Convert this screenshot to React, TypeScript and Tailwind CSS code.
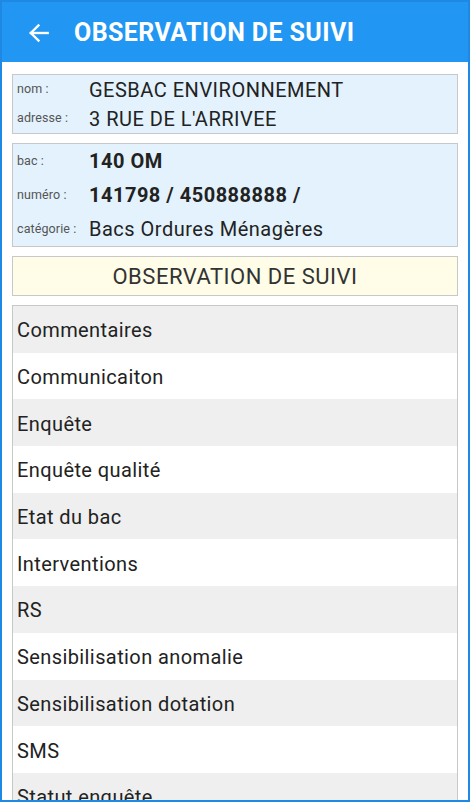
import React from "react";

const items = [
  "Commentaires",
  "Communicaiton",
  "Enquête",
  "Enquête qualité",
  "Etat du bac",
  "Interventions",
  "RS",
  "Sensibilisation anomalie",
  "Sensibilisation dotation",
  "SMS",
  "Statut enquête",
];

function Row({ label, value, bold, h }: { label: string; value: string; bold?: boolean; h: string }) {
  return (
    <div className={`flex items-center ${h}`}>
      <div className="w-[76px] shrink-0 pl-[4px] text-[12.5px] text-[#555555] tracking-[0.1px]">{label}</div>
      <div className={`text-[20px] text-[#222222] tracking-[0.5px] whitespace-nowrap ${bold ? "font-bold" : ""}`}>{value}</div>
    </div>
  );
}

export default function App() {
  return (
    <div
      className="w-[470px] h-[802px] overflow-hidden border-2 border-[#1E88E5] bg-white flex flex-col"
      style={{ fontFamily: "Roboto, 'Noto Sans', sans-serif" }}
    >
      <div className="h-[60px] shrink-0 bg-[#2196F3] flex items-center pt-[2px]">
        <svg className="ml-[24px] w-[26px] h-[26px]" viewBox="0 0 24 24" fill="none" stroke="white" strokeWidth="2.2" strokeLinecap="square">
          <path d="M20 12H4.5" />
          <path d="M11.5 5L4.5 12L11.5 19" />
        </svg>
        <div className="ml-[22px] text-white font-bold text-[25px] tracking-[0.4px]">OBSERVATION DE SUIVI</div>
      </div>
      <div className="flex-1 flex flex-col px-[10px] pt-[12px]">
        <div className="border border-[#c8c8c8] bg-[#E3F2FD]">
          <Row h="h-[29px]" label="nom :" value="GESBAC ENVIRONNEMENT" />
          <Row h="h-[29px]" label="adresse :" value="3 RUE DE L'ARRIVEE" />
        </div>
        <div className="mt-[9px] border border-[#c8c8c8] bg-[#E3F2FD]">
          <Row h="h-[34px]" bold label="bac :" value="140 OM" />
          <Row h="h-[34px]" bold label="numéro :" value="141798 / 450888888 /" />
          <Row h="h-[34px]" label="catégorie :" value="Bacs Ordures Ménagères" />
        </div>
        <div className="mt-[9px] h-[40px] shrink-0 border border-[#c8c8c8] bg-[#FFFDE7] flex items-center justify-center text-[22px] tracking-[0.5px] text-[#333333]">
          OBSERVATION DE SUIVI
        </div>
        <div className="mt-[9px] border border-[#c8c8c8] flex-1 overflow-hidden">
          {items.map((it, i) => (
            <div
              key={it}
              className={`h-[46.7px] flex items-center pl-[4px] pt-[2px] text-[20px] tracking-[0.4px] text-[#222222] ${i % 2 === 0 ? "bg-[#EFEFEF]" : "bg-white"}`}
            >
              {it}
            </div>
          ))}
        </div>
      </div>
    </div>
  );
}
